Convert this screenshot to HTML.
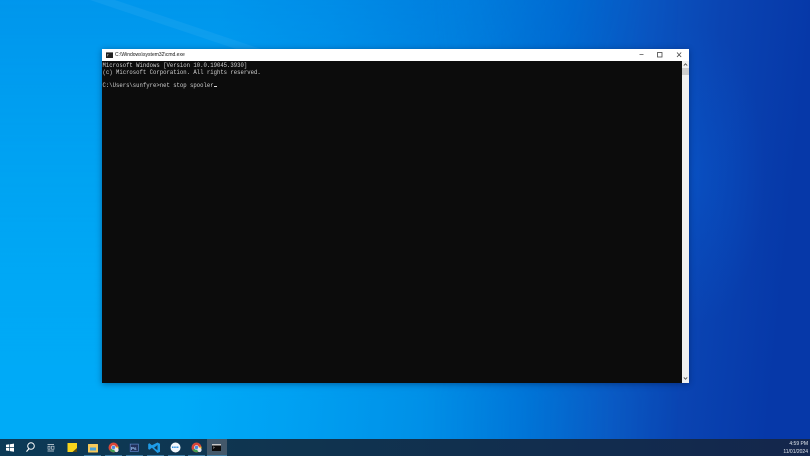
<!DOCTYPE html>
<html>
<head>
<meta charset="utf-8">
<style>
html,body{margin:0;padding:0;width:810px;height:456px;overflow:hidden;background:#0078d7}
*{box-sizing:border-box}
#bg{position:absolute;left:0;top:0;width:810px;height:440px;background:
 radial-gradient(ellipse 70px 150px at 695px 175px,rgba(6,95,215,.35),rgba(6,95,215,0) 100%),
 linear-gradient(96deg,#00a8f5 0px,#00a8f5 220px,#009bee 330px,#0085e0 460px,#006cd2 560px,#0a54c0 650px,#0a44b2 720px,#0638a8 810px)}
#ov{position:absolute;left:0;top:0;width:810px;height:440px;background:linear-gradient(180deg,rgba(0,105,215,.28) 0,rgba(0,110,215,.08) 170px,rgba(0,170,250,0) 270px,rgba(0,180,255,.25) 400px);-webkit-mask-image:linear-gradient(90deg,#000 0,#000 420px,transparent 680px);mask-image:linear-gradient(90deg,#000 0,#000 420px,transparent 680px)}
#win{position:absolute;left:102px;top:49px;width:587px;height:334px;background:#fff;box-shadow:0 1px 6px rgba(0,20,60,.45)}
#tb{position:absolute;left:0;top:0;width:587px;height:12px;background:#fff}
#ttl{position:absolute;left:13px;top:3px;font:5px/7px "Liberation Sans",sans-serif;color:#111;white-space:nowrap;filter:blur(.2px)}
#con{position:absolute;left:0;top:12px;width:580px;height:322px;background:#0c0c0c;overflow:hidden}
#con div{position:absolute;left:0.5px;font:5.62px/7px "Liberation Mono",monospace;color:#d0d0d0;white-space:pre;transform:scaleY(1.18);transform-origin:0 0;filter:blur(.2px)}
#cur{position:absolute;left:112px;top:24.5px;width:3.4px;height:1.4px;background:#ddd}
#sb{position:absolute;left:580px;top:12px;width:7px;height:322px;background:#f0f0f0}
#task{position:absolute;left:0;top:439px;width:810px;height:17px;background:linear-gradient(90deg,#0c3a56 0,#10344f 300px,#122c4e 600px,#14264c 810px)}
.u{position:absolute;top:16px;height:1px;background:#3f7ea6}
svg{position:absolute;display:block}
#clk{position:absolute;right:2px;top:.5px;width:40px;text-align:right;font:5px/8px "Liberation Sans",sans-serif;color:#e4eaf0;white-space:pre;filter:blur(.15px)}
</style>
</head>
<body>
<div id="bg"></div>
<div id="ov"></div>
<svg style="left:0;top:0" width="810" height="440"><polygon points="90,0 115,0 270,52 245,52" fill="#fff" opacity=".05"/></svg>
<div id="win">
 <div id="tb">
  <svg style="left:4px;top:3px" width="7" height="6" viewBox="0 0 7 6"><rect width="7" height="6" fill="#222"/><rect y="0" width="7" height="1" fill="#777"/><path d="M1 2.500h1.500M1 3.800h1" stroke="#ddd" stroke-width=".6"/></svg>
  <div id="ttl">C:\Windows\system32\cmd.exe</div>
  <svg style="left:530px;top:0" width="57" height="12" viewBox="0 0 57 12">
   <path d="M7.500 5.500h4" stroke="#444" stroke-width=".7"/>
   <rect x="25.500" y="3.500" width="4.500" height="4.500" fill="none" stroke="#444" stroke-width=".8"/>
   <path d="M45 3.500l4.200 4.500M49.200 3.500L45 8" stroke="#444" stroke-width=".8"/>
  </svg>
 </div>
 <div id="con">
  <div style="top:0">Microsoft Windows [Version 10.0.19045.3930]</div>
  <div style="top:6.8px">(c) Microsoft Corporation. All rights reserved.</div>
  <div style="top:20.3px">C:\Users\sunfyre&gt;net stop spooler</div>
  <span id="cur"></span>
 </div>
 <div id="sb">
  <svg style="left:0;top:0" width="7" height="322" viewBox="0 0 7 322">
   <rect x="0" y="7" width="7" height="7" fill="#cdcdcd"/>
   <path d="M1.800 4.600l1.700-1.800 1.700 1.800" fill="none" stroke="#555" stroke-width=".9"/>
   <path d="M1.800 316.400l1.700 1.800 1.700-1.800" fill="none" stroke="#555" stroke-width=".9"/>
  </svg>
 </div>
</div>
<div id="task">
 <svg style="left:0;top:0" width="240" height="17" viewBox="0 0 240 17">
  <rect x="207" y="0" width="20" height="17" fill="#43586a"/>
  <path d="M6 5.800l3.300-.5v3h-3.300zM10 5.200l4-.6v3.700h-4zM6 9h3.300v3l-3.300-.5zM10 9h4v3.700l-4-.6z" fill="#fff"/>
  <circle cx="31" cy="7" r="3.300" fill="none" stroke="#fff" stroke-width="1"/>
  <path d="M29 9.600l-2.500 3" stroke="#fff" stroke-width="1.100"/>
  <path d="M47.500 5.500h6.500M47.500 12h6.500" stroke="#dfe6ec" stroke-width=".7"/>
  <rect x="48" y="7.200" width="2" height="3" fill="none" stroke="#dfe6ec" stroke-width=".6"/>
  <rect x="51.500" y="7.200" width="2.500" height="3" fill="none" stroke="#dfe6ec" stroke-width=".6"/>
  <rect x="67.500" y="4" width="9.500" height="9" fill="#f8d51c"/>
  <path d="M72.500 13l4.500-4v4z" fill="#5a4a10"/>
  <rect x="88" y="5" width="10" height="8.500" rx=".5" fill="#f5c95a"/>
  <rect x="90" y="8.500" width="6" height="3" fill="#4aa3d8"/>
  <circle cx="113.500" cy="8.500" r="5" fill="#d8473a"/>
  <path d="M113.500 8.500L117.500 11.500a5 5 0 0 1-8-.5z" fill="#3f9e52"/>
  <path d="M113.500 8.500L118.400 7.500a5 5 0 0 1-.9 4z" fill="#f2c53a"/>
  <circle cx="113.500" cy="8.500" r="2" fill="#4a88e0" stroke="#fff" stroke-width=".6"/>
  <circle cx="116.500" cy="11" r="2.100" fill="#e8e4ec"/>
  <rect x="129.500" y="4.500" width="9.500" height="8.500" fill="#1f3a6e"/>
  <rect x="130.200" y="5.100" width="8.100" height="7.300" fill="#22315c" stroke="#6f9fe0" stroke-width=".5"/>
  <text x="131" y="11" font-family="Liberation Sans,sans-serif" font-size="4.500" font-weight="bold" fill="#9cc6f4">Ps</text>
  <path d="M157.500 3.500l2.500 1.200v8l-2.500 1.300-5.600-5.300-2.500 2-1.200-.7v-5l1.200-.7 2.500 2zM157.500 6l-3.400 2.700 3.400 2.700z" fill="#1e9ce8"/>
  <circle cx="175.500" cy="8.500" r="5" fill="#f2f7fc"/>
  <path d="M172 8.300h7" stroke="#2e8fe0" stroke-width="1.500" stroke-dasharray="1.500 .7"/>
  <circle cx="196.500" cy="8.500" r="5" fill="#d8473a"/>
  <path d="M196.500 8.500L200.500 11.500a5 5 0 0 1-8-.5z" fill="#3f9e52"/>
  <path d="M196.500 8.500L201.400 7.500a5 5 0 0 1-.9 4z" fill="#f2c53a"/>
  <circle cx="196.500" cy="8.500" r="2" fill="#4a88e0" stroke="#fff" stroke-width=".6"/>
  <circle cx="199.500" cy="11" r="2.100" fill="#e2e4ec"/>
  <rect x="212" y="5" width="9" height="7" fill="#0c0c0c"/>
  <rect x="212" y="5" width="9" height="1.500" fill="#c8c8c8"/>
  <path d="M213.200 7.800l1.200.8-1.200.8" fill="none" stroke="#eee" stroke-width=".5"/>
 </svg>
 <span class="u" style="left:84px;width:17px"></span>
 <span class="u" style="left:105px;width:17px"></span>
 <span class="u" style="left:126px;width:17px"></span>
 <span class="u" style="left:147px;width:17px"></span>
 <span class="u" style="left:168px;width:17px"></span>
 <span class="u" style="left:188px;width:17px"></span>
 <span class="u" style="left:207px;width:20px"></span>
 <div id="clk">4:59 PM
11/01/2024</div>
</div>
</body>
</html>
